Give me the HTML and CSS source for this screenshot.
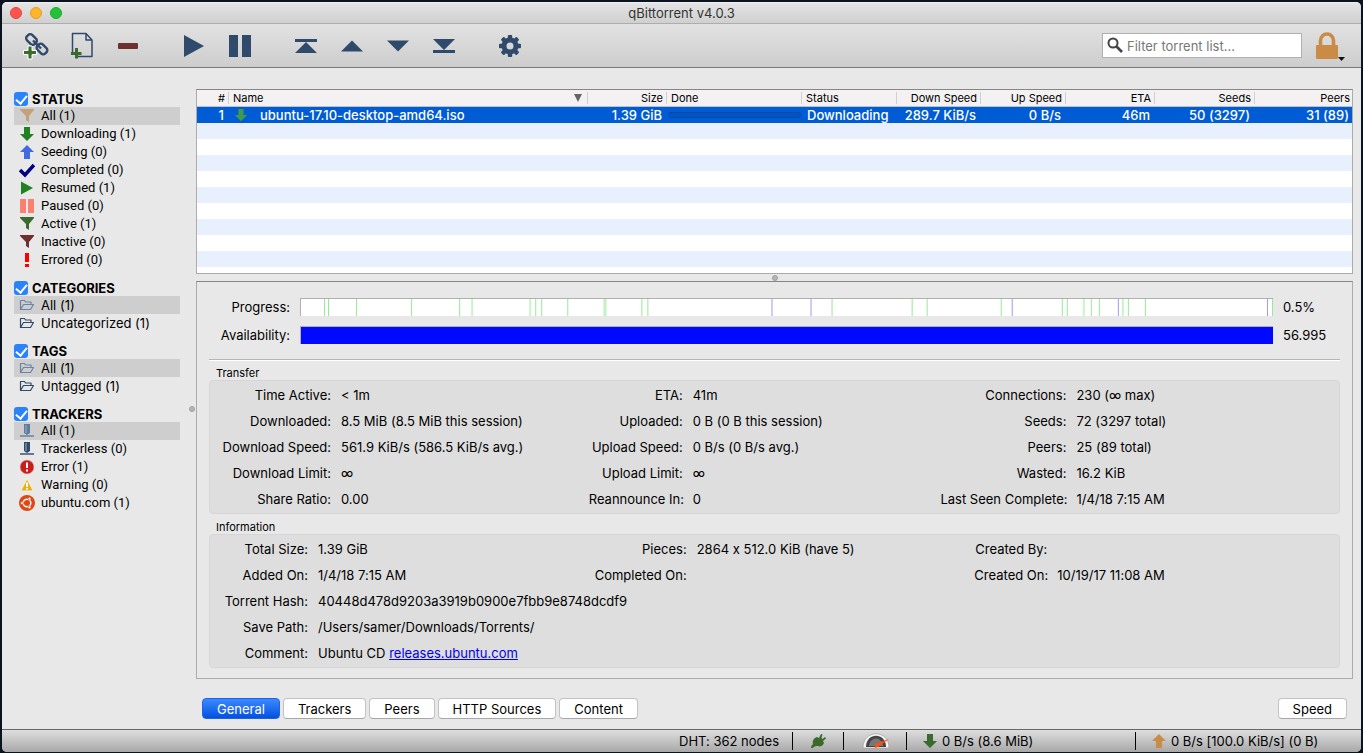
FILE: index.html
```html
<!DOCTYPE html>
<html lang="en">
<head>
    <meta charset="UTF-8">
    <meta name="viewport" content="width=device-width, initial-scale=1.0">
    <title>qBittorrent v4.0.3</title>
    <link rel="stylesheet" href="styles.css">
</head>
<body>
    <!-- Shared icon shapes -->
    <svg class="sprite" aria-hidden="true">
        <symbol id="funnel" viewBox="0 0 16 16"><path d="M1 1h14v1l-5 6v6l-3-2V8L1 2z"/></symbol>
        <symbol id="arrow" viewBox="0 0 16 16"><path d="M5 1h6v7h4l-7 7-7-7h4z"/></symbol>
        <symbol id="folder" viewBox="0 0 16 16"><path d="M1.5 12.5v-9h4l1 1.5h5.500v2.500M1.500 12.500l3-5h10l-3 5z" fill="none" stroke="currentColor" stroke-width="1.200" stroke-linejoin="round"/></symbol>
        <symbol id="server" viewBox="0 0 16 16"><path d="M5 1h6v9l-3 2-3-2z"/><path d="M7 2v8" stroke="#9fb0c4" stroke-width="1"/><path d="M1 12h14v2H1z" opacity=".7"/></symbol>
    </svg>

    <div class="window">
        <header class="titlebar">
            <div class="lights">
                <span class="light close"></span>
                <span class="light minimize"></span>
                <span class="light zoom"></span>
            </div>
            <h1>qBittorrent v4.0.3</h1>
        </header>

        <div class="toolbar">
            <button class="tool" aria-label="Add torrent link">
                <svg width="28" height="28" viewBox="0 0 28 28">
                    <g fill="none" stroke="#2f4a6b" stroke-width="2.400">
                        <rect x="-5.500" y="-3.800" width="11" height="7.600" rx="3" transform="translate(9.500 7.500) rotate(45)"/>
                        <rect x="-5.500" y="-3.800" width="11" height="7.600" rx="3" transform="translate(20 17) rotate(45)"/>
                        <path d="M11 8.500l8 8"/>
                    </g>
                    <path d="M6 14h4v4.500h4.500v4H10V27H6v-4.500H1.500v-4H6z" fill="#3a6a2c" stroke="#fff" stroke-width="1"/>
                </svg>
            </button>
            <button class="tool" aria-label="Add torrent file">
                <svg width="28" height="28" viewBox="0 0 28 28">
                    <path d="M4.500 20V1.500h13.500L24 8v16.500H9M18 1.500v6.500h6" fill="none" stroke="#2f4a6b" stroke-width="1.500" stroke-linejoin="round"/>
                    <path d="M7 16h3v4h3.500v3H10v3.500H7V23H3v-3h4z" fill="#3a6a2c"/>
                </svg>
            </button>
            <button class="tool" aria-label="Delete">
                <svg width="28" height="28" viewBox="0 0 28 28"><rect x="4" y="11" width="20" height="6" rx="1" fill="#6d2f30"/></svg>
            </button>
            <span class="spacer"></span>
            <button class="tool" aria-label="Resume">
                <svg width="28" height="28" viewBox="0 0 28 28"><path d="M4 3v22l20-11z"/></svg>
            </button>
            <button class="tool" aria-label="Pause">
                <svg width="28" height="28" viewBox="0 0 28 28"><path d="M3 3h9v22H3zM16 3h9v22h-9z"/></svg>
            </button>
            <span class="spacer"></span>
            <button class="tool" aria-label="Move to top">
                <svg width="28" height="28" viewBox="0 0 28 28"><path d="M3 7h22v3H3zM14 10l11 11H3z"/></svg>
            </button>
            <button class="tool" aria-label="Move up">
                <svg width="28" height="28" viewBox="0 0 28 28"><path d="M14 8.500l11 11H3z"/></svg>
            </button>
            <button class="tool" aria-label="Move down">
                <svg width="28" height="28" viewBox="0 0 28 28"><path d="M14 19.500l11-11H3z"/></svg>
            </button>
            <button class="tool" aria-label="Move to bottom">
                <svg width="28" height="28" viewBox="0 0 28 28"><path d="M14 18L25 7H3zM3 18h22v3H3z"/></svg>
            </button>
            <span class="spacer"></span>
            <button class="tool" aria-label="Options">
                <svg width="28" height="28" viewBox="0 0 28 28">
                    <g transform="translate(14 14)">
                        <circle r="6" fill="none" stroke="#2f4a6b" stroke-width="5"/>
                        <rect x="-2.200" y="-11" width="4.400" height="4" rx="1"/>
                        <rect x="-2.200" y="7" width="4.400" height="4" rx="1"/>
                        <rect x="-11" y="-2.200" width="4" height="4.400" rx="1"/>
                        <rect x="7" y="-2.200" width="4" height="4.400" rx="1"/>
                        <g transform="rotate(45)">
                            <rect x="-2.200" y="-11" width="4.400" height="4" rx="1"/>
                            <rect x="-2.200" y="7" width="4.400" height="4" rx="1"/>
                            <rect x="-11" y="-2.200" width="4" height="4.400" rx="1"/>
                            <rect x="7" y="-2.200" width="4" height="4.400" rx="1"/>
                        </g>
                    </g>
                </svg>
            </button>
            <label class="search">
                <svg width="18" height="18" viewBox="0 0 18 18"><circle cx="6" cy="6" r="4.500" fill="none" stroke="#444" stroke-width="2"/><path d="M9.500 9.500l5.500 5.500" stroke="#444" stroke-width="2.600"/></svg>
                <input type="text" placeholder="Filter torrent list..." aria-label="Filter torrent list">
            </label>
            <button class="lock" aria-label="Lock">
                <svg width="30" height="30" viewBox="0 0 30 30">
                    <path d="M5.500 15V9.500a6.500 6.500 0 0 1 13 0V15" fill="none" stroke="#ca8b47" stroke-width="3.600"/>
                    <rect x="1" y="14" width="22" height="14" rx="1" fill="#ca8b47"/>
                    <path d="M23 26h7l-3.500 4z" fill="#111"/>
                </svg>
            </button>
        </div>

        <div class="content">
            <aside class="sidebar">
                <section>
                    <label class="heading"><input type="checkbox" checked>STATUS</label>
                    <ul class="narrow">
                        <li class="selected"><svg fill="#c3a17b"><use href="#funnel"/></svg>All (1)</li>
                        <li><svg fill="#228022"><use href="#arrow"/></svg>Downloading (1)</li>
                        <li><svg fill="#4169e1" class="flip"><use href="#arrow"/></svg>Seeding (0)</li>
                        <li><svg viewBox="0 0 16 16"><path d="M1 8l5 5 9-10" fill="none" stroke="#000080" stroke-width="3.600"/></svg>Completed (0)</li>
                        <li><svg viewBox="0 0 16 16"><path d="M2 1.500v13L14 8z" fill="#228022"/></svg>Resumed (1)</li>
                        <li><svg viewBox="0 0 16 16"><path d="M1 1h6v14H1zM9 1h6v14H9z" fill="#fa8072"/></svg>Paused (0)</li>
                        <li><svg fill="#3a6a2c"><use href="#funnel"/></svg>Active (1)</li>
                        <li><svg fill="#6d2f30"><use href="#funnel"/></svg>Inactive (0)</li>
                        <li><svg viewBox="0 0 16 16"><path d="M6 1h4v9H6zM6 12h4v3H6z" fill="#f00"/></svg>Errored (0)</li>
                    </ul>
                </section>
                <section>
                    <label class="heading"><input type="checkbox" checked>CATEGORIES</label>
                    <ul>
                        <li class="selected"><svg color="#6c84a4"><use href="#folder"/></svg>All (1)</li>
                        <li><svg color="#2f4a6b"><use href="#folder"/></svg>Uncategorized (1)</li>
                    </ul>
                </section>
                <section>
                    <label class="heading"><input type="checkbox" checked>TAGS</label>
                    <ul>
                        <li class="selected"><svg color="#6c84a4"><use href="#folder"/></svg>All (1)</li>
                        <li><svg color="#2f4a6b"><use href="#folder"/></svg>Untagged (1)</li>
                    </ul>
                </section>
                <section>
                    <label class="heading"><input type="checkbox" checked>TRACKERS</label>
                    <ul class="narrow">
                        <li class="selected"><svg fill="#5f7c9f"><use href="#server"/></svg>All (1)</li>
                        <li><svg fill="#2f4a6b"><use href="#server"/></svg>Trackerless (0)</li>
                        <li><svg viewBox="0 0 16 16"><circle cx="8" cy="8" r="7" fill="#c81e1e" stroke="#e9b5b5" stroke-width=".6"/><path d="M7 3.500h2v5.500H7zM7 10.500h2v2H7z" fill="#fff"/></svg>Error (1)</li>
                        <li><svg viewBox="0 0 16 16"><path d="M8 1.500l6.500 12.500h-13z" fill="#e8b020" stroke="#f8efd0" stroke-width="1.200" stroke-linejoin="round"/><path d="M7 5.500h2v4.500H7zM7 11h2v1.600H7z" fill="#fff"/></svg>Warning (0)</li>
                        <li><svg viewBox="0 0 16 16"><circle cx="8" cy="8" r="8" fill="#dd4814"/><circle cx="8" cy="8" r="3.800" fill="none" stroke="#fff" stroke-width="1.500"/><g fill="#fff" stroke="#dd4814" stroke-width=".7"><circle cx="3" cy="8" r="1.500"/><circle cx="10.500" cy="3.700" r="1.500"/><circle cx="10.500" cy="12.300" r="1.500"/></g></svg>ubuntu.com (1)</li>
                    </ul>
                </section>
            </aside>
            <div class="splitter vertical"><span></span></div>

            <main>
                <div class="torrents">
                    <table>
                        <colgroup>
                            <col class="c-num"><col><col class="c-size"><col class="c-done"><col class="c-status">
                            <col class="c-down"><col class="c-up"><col class="c-eta"><col class="c-seeds"><col class="c-peers">
                        </colgroup>
                        <thead>
                            <tr>
                                <th class="num">#</th>
                                <th><span class="sorted">Name <i></i></span></th>
                                <th class="num">Size</th>
                                <th>Done</th>
                                <th>Status</th>
                                <th class="num">Down Speed</th>
                                <th class="num">Up Speed</th>
                                <th class="num">ETA</th>
                                <th class="num">Seeds</th>
                                <th class="num">Peers</th>
                            </tr>
                        </thead>
                        <tbody>
                            <tr>
                                <td class="num">1</td>
                                <td><span class="name"><svg width="14" height="14" fill="#3f9a50"><use href="#arrow"/></svg>ubuntu-17.10-desktop-amd64.iso</span></td>
                                <td class="num">1.39 GiB</td>
                                <td class="done"><div class="done-bar"></div></td>
                                <td>Downloading</td>
                                <td class="num">289.7 KiB/s</td>
                                <td class="num">0 B/s</td>
                                <td class="num">46m</td>
                                <td class="num">50 (3297)</td>
                                <td class="num">31 (89)</td>
                            </tr>
                        </tbody>
                    </table>
                </div>
                <div class="splitter"><span></span></div>

                <div class="details">
                    <div class="bars">
                        <span class="bar-label">Progress:</span>
                        <svg class="bar" viewBox="0 0 971 17" preserveAspectRatio="none">
                            <path d="M23.500 0v17M27.500 0v17M55.500 0v17M110.500 0v17M158.500 0v17M234.500 0v17M240.500 0v17M266.500 0v17M304.500 0v17M340.500 0v17M346.500 0v17M530.500 0v17M610.500 0v17M625.500 0v17M699.500 0v17M760.500 0v17M765.500 0v17M789.500 0v17M797.500 0v17M826.500 0v17M843.500 0v17M970.500 0v17" stroke="#98e898"/>
                            <path d="M171 0v17M229 0v17M303 0v17M782 0v17M821 0v17" stroke="#c8f4c8" stroke-width="2"/>
                            <path d="M470.500 0v17M509.500 0v17M710.500 0v17M816.500 0v17M965.500 0v17" stroke="#9c9cf4"/>
                        </svg>
                        <span>0.5%</span>
                        <span class="bar-label">Availability:</span>
                        <div class="bar full"></div>
                        <span>56.995</span>
                    </div>

                    <h2>Transfer</h2>
                    <dl class="group transfer">
                        <dt>Time Active:</dt><dd>&lt; 1m</dd>
                        <dt>ETA:</dt><dd>41m</dd>
                        <dt>Connections:</dt><dd>230 (∞ max)</dd>
                        <dt>Downloaded:</dt><dd>8.5 MiB (8.5 MiB this session)</dd>
                        <dt>Uploaded:</dt><dd>0 B (0 B this session)</dd>
                        <dt>Seeds:</dt><dd>72 (3297 total)</dd>
                        <dt>Download Speed:</dt><dd>561.9 KiB/s (586.5 KiB/s avg.)</dd>
                        <dt>Upload Speed:</dt><dd>0 B/s (0 B/s avg.)</dd>
                        <dt>Peers:</dt><dd>25 (89 total)</dd>
                        <dt>Download Limit:</dt><dd>∞</dd>
                        <dt>Upload Limit:</dt><dd>∞</dd>
                        <dt>Wasted:</dt><dd>16.2 KiB</dd>
                        <dt>Share Ratio:</dt><dd>0.00</dd>
                        <dt>Reannounce In:</dt><dd>0</dd>
                        <dt>Last Seen Complete:</dt><dd>1/4/18 7:15 AM</dd>
                    </dl>

                    <h2>Information</h2>
                    <dl class="group information">
                        <dt>Total Size:</dt><dd>1.39 GiB</dd>
                        <dt>Pieces:</dt><dd>2864 x 512.0 KiB (have 5)</dd>
                        <dt>Created By:</dt><dd></dd>
                        <dt>Added On:</dt><dd>1/4/18 7:15 AM</dd>
                        <dt>Completed On:</dt><dd></dd>
                        <dt>Created On:</dt><dd>10/19/17 11:08 AM</dd>
                        <dt>Torrent Hash:</dt><dd class="wide">40448d478d9203a3919b0900e7fbb9e8748dcdf9</dd>
                        <dt>Save Path:</dt><dd class="wide">/Users/samer/Downloads/Torrents/</dd>
                        <dt>Comment:</dt><dd class="wide">Ubuntu CD <a href="#">releases.ubuntu.com</a></dd>
                    </dl>
                </div>

                <div class="tabs">
                    <button class="active">General</button>
                    <button>Trackers</button>
                    <button>Peers</button>
                    <button>HTTP Sources</button>
                    <button>Content</button>
                    <button class="speed">Speed</button>
                </div>
            </main>
        </div>

        <footer class="statusbar">
            <span class="dht">DHT: 362 nodes</span>
            <span class="plug">
                <svg width="16" height="16" viewBox="0 0 16 16"><path d="M1 15c0-2 1-3 2-4C2 8 4 5 7 4l2 1 2-4 1.500.500L11.500 5l1 1L15 4l1 1.500L13 8l1 2c-1 3-4 4-6 3-2 0-3 0-4 1-1 1-2 1-3 1z" fill="#3a6a2c"/></svg>
            </span>
            <span class="gauge">
                <svg width="28" height="16" viewBox="0 0 28 16">
                    <path d="M1 15C1-4 27-4 27 15z" fill="#f4f4f4" stroke="#999" stroke-width=".6"/>
                    <path d="M4 14C4-1 24-1 24 14z" fill="#444"/>
                    <path d="M7 13C8 3 20 3 21 13z" fill="#777"/>
                    <path d="M13 11l14-5-11 8-3 1z" fill="#ff4e10"/>
                </svg>
            </span>
            <span class="down"><svg width="16" height="16" fill="#3a6a2c"><use href="#arrow"/></svg>0 B/s (8.6 MiB)</span>
            <span class="up"><svg width="16" height="16" fill="#ca8b47" class="flip"><use href="#arrow"/></svg>0 B/s [100.0 KiB/s] (0 B)</span>
        </footer>
    </div>
</body>
</html>
```
FILE: styles.css
```css
* {
    box-sizing: border-box;
}
body {
    margin: 0;
    padding: 2px 2px 1px;
    background: #0b1320;
    color: #000;
    font-family: Inter, Roboto, sans-serif;
    font-size: 13px;
    font-feature-settings: "calt" 0;
    line-height: 16px;
}
button {
    font: inherit;
    border: none;
    padding: 0;
}
h1, h2, ul, dl, dd {
    margin: 0;
    padding: 0;
    font-weight: 400;
}
.sprite {
    position: absolute;
    width: 0;
    height: 0;
}
.flip {
    transform: rotate(180deg);
}
.window {
    display: flex;
    flex-direction: column;
    min-height: calc(100vh - 3px);
    background: #e8e8e8;
    border-radius: 5px;
    overflow: hidden;
}

/* Title bar and toolbar */
.titlebar {
    display: grid;
    grid-template-columns: 1fr auto 1fr;
    align-items: center;
    height: 22px;
    background: linear-gradient(#f2f2f2, #e2e2e2 2px, #d0d0d0);
    border-bottom: 1px solid #adadad;
}
.titlebar h1 {
    font-size: 13px;
    color: #333;
}
.lights {
    display: flex;
    gap: 8px;
    padding-left: 8px;
}
.light {
    width: 12px;
    height: 12px;
    border-radius: 50%;
}
.close {
    background: #ff544d;
    border: 1px solid #e0443e;
}
.minimize {
    background: #ffb429;
    border: 1px solid #dea123;
}
.zoom {
    background: #25c138;
    border: 1px solid #1aab29;
}
.toolbar {
    display: flex;
    align-items: center;
    height: 44px;
    padding: 0 16px 0 11px;
    background: linear-gradient(#e2e2e2, #cdcdcd);
    border-bottom: 1px solid #797979;
}
.tool {
    display: flex;
    align-items: center;
    justify-content: center;
    width: 46px;
    height: 40px;
    background: none;
}
.tool svg {
    fill: #2f4a6b;
}
.spacer {
    width: 20px;
}
.search {
    display: flex;
    align-items: center;
    width: 200px;
    height: 25px;
    margin-left: auto;
    padding: 0 4px;
    gap: 2px;
    background: #fff;
    border: 1px solid #b0b0b0;
}
.search input {
    flex: 1;
    min-width: 0;
    border: none;
    outline: none;
    padding: 0;
    background: none;
    font: inherit;
}
.search input::placeholder {
    color: #777;
}
.lock {
    display: flex;
    margin-left: 13px;
    background: none;
}

/* Sidebar */
.content {
    display: flex;
    flex: 1;
}
.sidebar {
    width: 178px;
    padding: 12px 0 0 12px;
}
.heading {
    display: flex;
    align-items: flex-end;
    gap: 4px;
    height: 27px;
    font-weight: 700;
}
.heading input {
    appearance: none;
    display: flex;
    justify-content: center;
    width: 14px;
    height: 14px;
    margin: 0 0 1px;
    background: #2b83fb;
    border-radius: 3px;
}
.heading input:checked::after {
    content: "";
    width: 5px;
    height: 9px;
    margin-top: 1px;
    border: solid #fff;
    border-width: 0 2px 2px 0;
    transform: rotate(40deg);
}
.sidebar ul {
    list-style: none;
}
.sidebar .narrow {
    font-family: Roboto, sans-serif;
}
.sidebar li {
    display: flex;
    align-items: center;
    gap: 6px;
    height: 18px;
    padding-left: 5px;
}
.sidebar li svg {
    width: 16px;
    height: 16px;
}
.sidebar .selected {
    background: #cecece;
}
.splitter {
    display: flex;
    align-items: center;
    justify-content: center;
    height: 7px;
}
.splitter span {
    width: 6px;
    height: 6px;
    background: #b4b4b4;
    border: 1px solid #a2a2a2;
    border-radius: 50%;
}
.splitter.vertical {
    width: 16px;
    height: auto;
    padding: 20px 0 0 8px;
}

/* Torrent list */
main {
    display: flex;
    flex-direction: column;
    flex: 1;
    min-width: 0;
    padding: 21px 8px 10px 0;
}
.torrents {
    flex: 1;
    min-height: 180px;
    border: 1px solid #ababab;
    border-top-color: #868686;
    background: repeating-linear-gradient(#fff 0 16px, #e8f0fe 16px 32px);
    background-position: 0 17px;
}
table {
    width: 100%;
    table-layout: fixed;
    border-collapse: separate;
    border-spacing: 0;
}
.c-num { width: 32px; }
.c-size { width: 79px; }
.c-done { width: 135px; }
.c-status { width: 95px; }
.c-down { width: 84px; }
.c-up { width: 85px; }
.c-eta { width: 89px; }
.c-seeds { width: 100px; }
.c-peers { width: 97px; }
th {
    height: 17px;
    padding: 0 4px;
    background: linear-gradient(#cfcfcf, #cfcfcf) right center / 1px 12px no-repeat #f4f1f2;
    border-bottom: 1px solid #c0c0c0;
    font-size: 11px;
    font-weight: 400;
    line-height: 16px;
    text-align: left;
    white-space: nowrap;
}
th:last-child {
    padding-right: 2px;
    background: #f4f1f2;
}
.sorted {
    display: flex;
    align-items: center;
    justify-content: space-between;
}
.sorted i {
    margin-right: 2px;
    border: solid transparent;
    border-width: 8px 4px 0;
    border-top-color: #666;
}
td {
    height: 16px;
    padding: 0 5px;
    background: #005cd4;
    color: #fff;
    font-weight: 500;
    white-space: nowrap;
}
td:last-child {
    padding-right: 3px;
}
.num {
    text-align: right;
}
.name {
    display: flex;
    align-items: center;
    gap: 12px;
}
td.done {
    padding: 0 1px;
}
.done-bar {
    height: 6px;
    border: 1px solid #0049a8;
    border-radius: 3px;
    background: #0055c4;
}

/* Details */
.details {
    padding: 16px 12px 10px;
    border: 1px solid #ababab;
    border-top-color: #868686;
}
.bars {
    display: grid;
    grid-template-columns: 81px 1fr 57px;
    column-gap: 10px;
    row-gap: 10px;
    align-items: center;
    height: 62px;
    align-content: start;
    border-bottom: 1px solid #b5b5b5;
    box-shadow: 0 1px #fff;
}
.bar-label {
    text-align: right;
}
.bar {
    display: block;
    width: 100%;
    height: 18px;
    background: #fff;
    border: solid #b0b0b0;
    border-width: 1px 0 0 1px;
}
.full {
    background: #0008ff;
}
h2 {
    height: 20px;
    padding: 5px 7px 0;
    font-size: 11px;
    line-height: 16px;
}
.group {
    display: grid;
    column-gap: 10px;
    row-gap: 10px;
    padding: 6px 10px 6px 11px;
    background: #dedede;
    border: 1px solid #d6d6d6;
    border-radius: 4px;
}
.transfer {
    grid-template-columns: 110px 16fr 94px 16fr 126px 17fr;
}
.information {
    grid-template-columns: 87px 267fr 92px 268fr 73px 272fr;
}
.group dt {
    text-align: right;
    white-space: nowrap;
}
.group dd {
    min-width: 0;
    white-space: nowrap;
}
.group .wide {
    grid-column: 2 / -1;
}
.group a {
    color: #0000f0;
}

/* Tabs and status bar */
.tabs {
    display: flex;
    gap: 3px;
    margin-top: 19px;
    padding: 0 6px;
}
.tabs button {
    height: 21px;
    padding: 0 14px;
    background: #fff;
    border: 1px solid #c2c2c2;
    border-bottom-color: #a8a8a8;
    border-radius: 4px;
}
.tabs .active {
    background: linear-gradient(#3b8afd, #0350e0);
    border-color: #1d62e8;
    color: #fff;
}
.tabs .speed {
    margin-left: auto;
}
.statusbar {
    display: flex;
    justify-content: flex-end;
    align-items: center;
    height: 23px;
    background: linear-gradient(#dedede, #a8a8a8);
    border-top: 1px solid #666;
}
.statusbar span {
    display: flex;
    align-items: center;
    gap: 4px;
    height: 18px;
    border-left: 1px solid #000;
    white-space: nowrap;
}
.statusbar .dht {
    padding-right: 13px;
    border: none;
}
.statusbar .plug {
    width: 51px;
    padding-left: 17px;
}
.statusbar .gauge {
    width: 63px;
    padding-left: 18px;
}
.statusbar .down {
    width: 229px;
    padding-left: 15px;
}
.statusbar .up {
    width: 226px;
    padding-left: 15px;
}
```
